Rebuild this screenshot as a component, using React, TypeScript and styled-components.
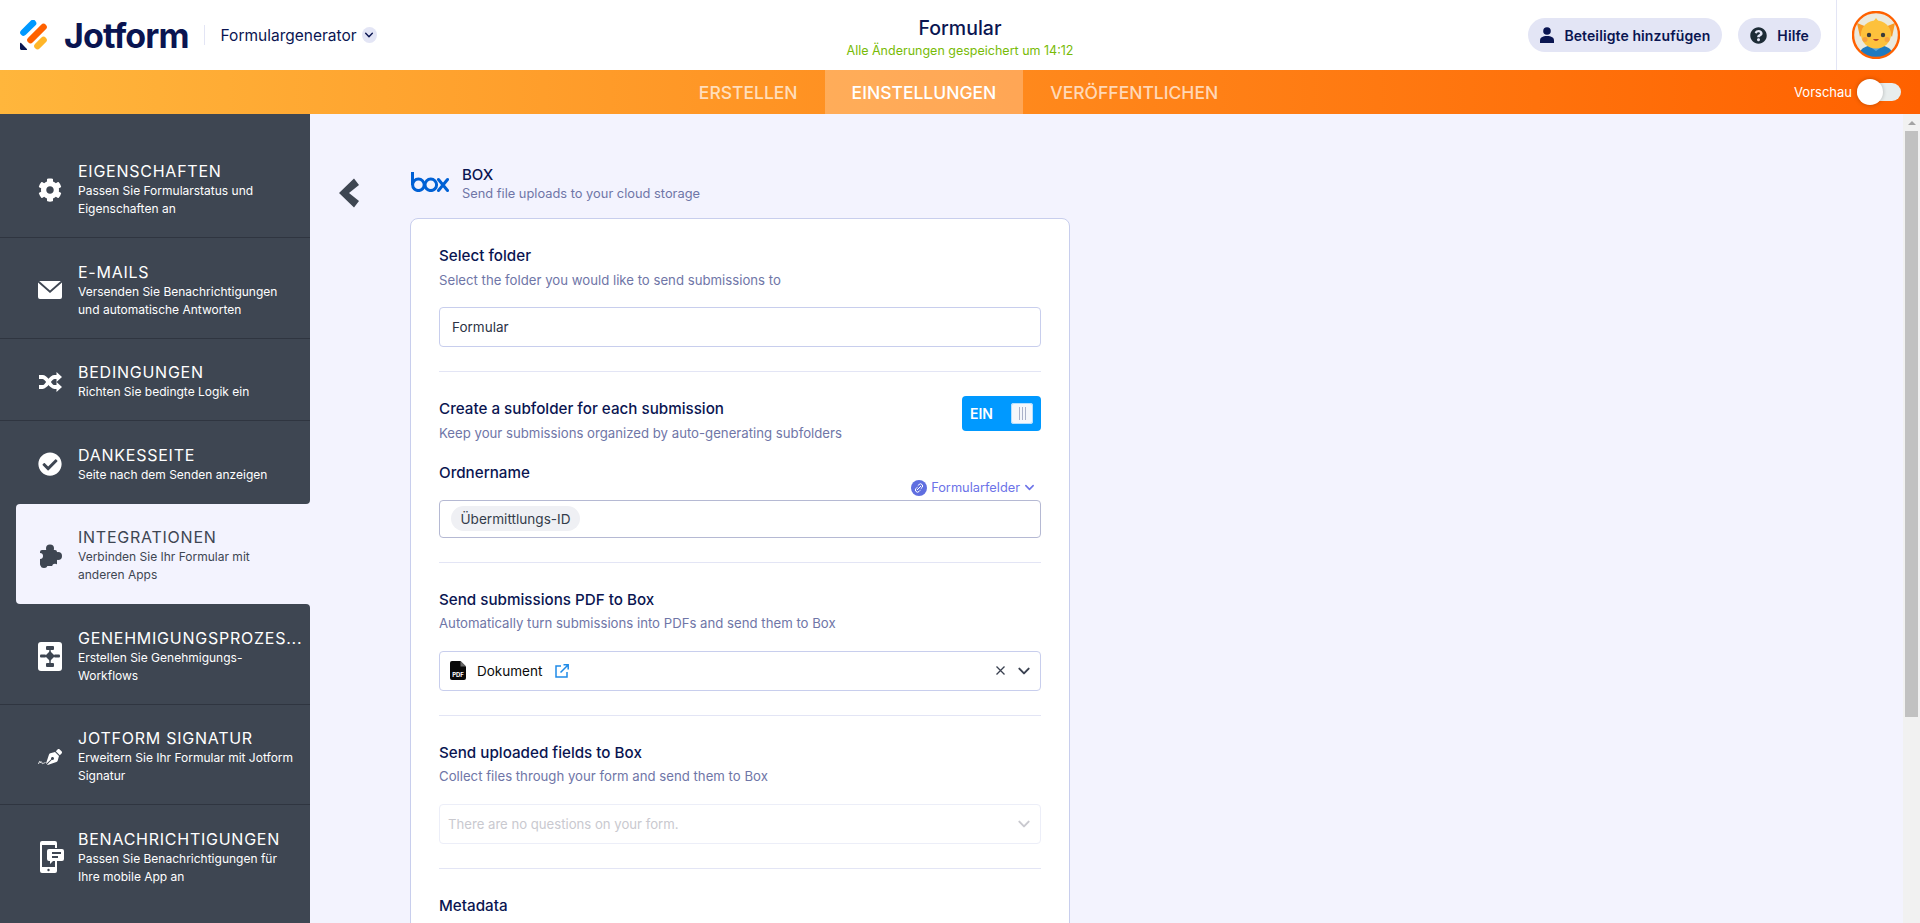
import React from "react"
import styled, { createGlobalStyle } from "styled-components"
import { FaCog, FaCheckCircle, FaQuestionCircle, FaPenNib } from "react-icons/fa"

const FONT = `Inter, "Noto Sans", sans-serif`

const GlobalStyle = createGlobalStyle`
html, body {
  margin: 0;
  padding: 0;
  height: 100%;
  overflow: hidden;
  font-family: ${FONT};
}
* {
  box-sizing: border-box;
}
`

const Page = styled.div`
display: flex;
flex-direction: column;
height: 923px;
overflow: hidden;
background: #f3f3fe;
`

const TopBar = styled.header`
display: grid;
grid-template-columns: 1fr auto 1fr;
align-items: center;
height: 70px;
flex: none;
background: #fff;
`
const BrandRow = styled.div`
display: flex;
align-items: center;
padding-left: 20px;
`
const LogoText = styled.span`
font-size: 34px;
font-weight: 700;
letter-spacing: -0.9px;
color: #0a1551;
margin-left: 16px;
`
const BrandDivider = styled.span`
width: 1px;
height: 20px;
background: #e3e5f5;
margin: 0 16px 0 15px;
`
const BrandLabel = styled.span`
font-size: 15.5px;
color: #0a1551;
`
const ChevronBubble = styled.span`
display: flex;
align-items: center;
justify-content: center;
width: 15px;
height: 16px;
margin-left: 5px;
border-radius: 50%;
background: #e3e5f5;
`
const FormTitle = styled.div`
text-align: center;
padding-top: 4px;
`
const FormName = styled.div`
font-size: 19.5px;
line-height: 22px;
font-weight: 500;
color: #0a1551;
padding-top: 2px;
`
const SavedNote = styled.div`
font-size: 12.5px;
line-height: 16px;
color: #78bb07;
margin-top: 4px;
`
const ActionRow = styled.div`
display: flex;
align-items: center;
justify-content: flex-end;
height: 100%;
`
const PillButton = styled.button`
display: flex;
align-items: center;
gap: 10px;
height: 34px;
padding: 0 12px;
margin-left: 16px;
border: none;
border-radius: 17px;
background: #e3e5f5;
color: #0a1551;
font-family: ${FONT};
font-size: 14px;
font-weight: 600;
letter-spacing: 0.1px;
`
const AvatarCell = styled.div`
display: flex;
align-items: center;
height: 100%;
margin-left: 15px;
padding: 0 20px 0 15px;
border-left: 1px solid #e3e5f5;
`

const TabBar = styled.nav`
display: grid;
grid-template-columns: 1fr auto 1fr;
align-items: stretch;
height: 44px;
flex: none;
background: linear-gradient(90deg, #ffb63c 0%, #ff6100 100%);
`
const Tabs = styled.div`
display: flex;
margin-left: -3px;
`
const Tab = styled.div<{ $active?: boolean }>`
display: flex;
align-items: center;
padding: 0 27px;
font-size: 17.5px;
font-weight: 500;
color: ${p => (p.$active ? "#fff" : "rgba(255,255,255,0.7)")};
background: ${p => (p.$active ? "rgba(255,255,255,0.25)" : "transparent")};
`
const PreviewRow = styled.div`
grid-column: 3;
display: flex;
align-items: center;
justify-content: flex-end;
padding-right: 19px;
`
const PreviewLabel = styled.span`
font-size: 13px;
color: #fff;
margin-right: 5px;
`
const PreviewTrack = styled.span`
display: block;
width: 44px;
height: 18px;
border-radius: 9px;
background: #e8eded;
`
const PreviewKnob = styled.span`
display: block;
width: 26px;
height: 26px;
margin-top: -4px;
border-radius: 50%;
background: #fff;
box-shadow: 0 0 4px rgba(0, 0, 0, 0.25);
`

const Workspace = styled.div`
display: flex;
flex: 1;
min-height: 0;
`

const Sidebar = styled.aside`
width: 310px;
flex: none;
padding-top: 23.5px;
background: linear-gradient(#f3f3fe, #f3f3fe) right 380px / 6px 120px no-repeat, #3e4652;
`
const SideItem = styled.div<{ $active?: boolean; $before?: boolean; $after?: boolean; $last?: boolean }>`
display: flex;
align-items: center;
gap: 16px;
margin-left: ${p => (p.$active ? "16px" : "0")};
padding: 23.5px 8px 19px ${p => (p.$active ? "22px" : "38px")};
background: ${p => (p.$active ? "#f3f3fe" : "#3e4652")};
border-bottom: 1px solid ${p => (p.$active || p.$before || p.$last ? "transparent" : "#2f3540")};
color: ${p => (p.$active ? "#3e4652" : "#fff")};
border-radius: ${p =>
  p.$active ? "4px 0 0 4px" : p.$before ? "0 0 4px 0" : p.$after ? "0 4px 0 0" : "0"};
`
const SideIcon = styled.span`
display: flex;
align-items: center;
justify-content: center;
width: 24px;
flex: none;
`
const SideTitle = styled.div`
font-size: 16px;
line-height: 20px;
letter-spacing: 0.75px;
margin-bottom: 1px;
white-space: nowrap;
text-transform: uppercase;
`
const SideText = styled.div`
font-size: 12px;
line-height: 18px;
white-space: nowrap;
`
const SignGroup = styled.span`
display: flex;
align-items: flex-end;
`
const PhoneSvg = styled.svg`
margin-left: 3px;
flex: none;
`

const Main = styled.main`
display: flex;
flex: 1;
min-width: 0;
padding: 51px 0 0 29px;
overflow: hidden;
`
const BackButton = styled.div`
width: 71px;
flex: none;
padding-top: 13px;
`
const Column = styled.div`
width: 660px;
flex: none;
`
const IntegrationHead = styled.div`
display: flex;
align-items: flex-start;
gap: 13px;
margin-left: 1px;
`
const LogoSlot = styled.div`
padding-top: 7px;
flex: none;
`
const IntegrationName = styled.div`
font-size: 15px;
line-height: 20px;
font-weight: 500;
color: #0a1551;
`
const IntegrationText = styled.div`
font-size: 12.85px;
line-height: 20px;
margin-top: -1px;
color: #6f76a7;
`
const Card = styled.section`
margin-top: 14px;
padding: 0 28px 60px;
background: #fff;
border: 1px solid #c8ceed;
border-radius: 8px;
`
const Block = styled.div<{ $last?: boolean }>`
padding: 24px 0;
border-bottom: ${p => (p.$last ? "none" : "1px solid #e3e5f5")};
`
const HeadRow = styled.div`
display: flex;
justify-content: space-between;
align-items: flex-start;
`
const Heading = styled.div`
padding-top: 3px;
`
const Label = styled.div`
font-size: 15.2px;
line-height: 20px;
font-weight: 500;
color: #0a1551;
`
const Hint = styled.div`
font-size: 13.2px;
line-height: 20px;
margin-top: 3.5px;
color: #6f76a7;
`
const Field = styled.div<{ $muted?: boolean; $strong?: boolean; $select?: boolean }>`
display: flex;
align-items: center;
height: ${p => (p.$strong ? "38px" : "40px")};
margin-top: ${p => (p.$strong ? "4px" : "17.5px")};
padding: 0 ${p => (p.$select ? "9px" : "12px")} 0 ${p => (p.$muted ? "8px" : p.$select ? "10px" : "12px")};
border-radius: 4px;
background: #fff;
border: 1px solid ${p => (p.$muted ? "#eceef8" : p.$strong ? "#b5b9d3" : "#c8ceed")};
color: ${p => (p.$muted ? "#c9c9cf" : "#2c3345")};
font-size: ${p => (p.$muted ? "13.15px" : "13.5px")};
`
const OnSwitch = styled.div`
display: flex;
align-items: center;
justify-content: space-between;
width: 79px;
height: 35px;
padding: 0 8px;
border-radius: 4px;
background: #0099ff;
color: #fff;
font-size: 14px;
font-weight: 600;
`
const SwitchGrip = styled.span`
display: flex;
align-items: center;
justify-content: center;
gap: 2px;
width: 22px;
height: 21px;
border-radius: 3px;
background: #f4f7fb;
box-shadow: inset 0 0 0 1px #b3dfff;
`
const GripLine = styled.span`
width: 1px;
height: 13px;
background: #a9b1c9;
`
const SubLabel = styled.div`
font-size: 15.2px;
line-height: 20px;
font-weight: 500;
color: #0a1551;
margin-top: 20px;
`
const FieldsLink = styled.div`
display: flex;
align-items: center;
justify-content: flex-end;
gap: 4px;
height: 16px;
margin-top: -3px;
padding-right: 6px;
font-size: 12.8px;
color: #6c73e8;
`
const Chip = styled.span`
display: flex;
align-items: center;
height: 25px;
padding: 0 9.5px;
margin-left: -1px;
border-radius: 13px;
background: #eff0f4;
color: #343c4a;
font-size: 13.6px;
`
const Spacer = styled.span`
flex: 1;
`
const ControlGap = styled.span`
width: 12px;
flex: none;
`
const DocName = styled.span`
margin: 0 13px 0 11px;
color: #0a0a0a;
`

const ScrollTrack = styled.div`
display: flex;
flex-direction: column;
align-items: center;
width: 17px;
flex: none;
background: #f1f1f1;
`
const ScrollArrow = styled.div`
width: 0;
height: 0;
margin: 7px 0 6px;
border-left: 4px solid transparent;
border-right: 4px solid transparent;
border-bottom: 4px solid #a3a3a3;
`
const ScrollThumb = styled.div`
width: 13px;
height: 586px;
background: #c1c1c1;
`

const SmallChevron = ({ color = "#0a1551", size = 10 }: { color?: string; size?: number }) => (
    <svg width={size} height={size} viewBox="0 0 12 12" fill="none">
        <path d="M2 4l4 4 4-4" stroke={color} strokeWidth="1.7" strokeLinecap="round" strokeLinejoin="round" />
    </svg>
)

const LogoMark = () => (
    <svg width="28" height="30" viewBox="0 0 28 30">
        <path d="M3.5 12.5L13 3.2" stroke="#0099ff" strokeWidth="6.6" strokeLinecap="round" />
        <path d="M10.5 20L23.5 7" stroke="#ff6100" strokeWidth="6.6" strokeLinecap="round" />
        <path d="M17.5 26L23.5 20" stroke="#ffb629" strokeWidth="6.6" strokeLinecap="round" />
        <path d="M0 23.5c0-.6.7-.9 1.1-.5l5.8 6c.4.4.1 1-.5 1H1.5C.7 30 0 29.300 0 28.500z" fill="#0a1551" />
    </svg>
)

const PersonIcon = () => (
    <svg width="14" height="16" viewBox="0 0 14 16" fill="#0a1551">
        <circle cx="7" cy="4" r="3.8" />
        <path d="M0 13.500C0 10.500 2.500 9 7 9s7 1.500 7 4.500V16H0z" />
    </svg>
)

const Avatar = () => (
    <svg width="48" height="48" viewBox="0 0 48 48">
        <defs>
            <clipPath id="avatarClip"><circle cx="24" cy="24" r="23" /></clipPath>
        </defs>
        <g clipPath="url(#avatarClip)">
            <rect width="48" height="48" fill="#ebe9dd" />
            <path d="M6 48c0-9 6-14 18-14s18 5 18 14z" fill="#1f7ac0" />
            <path d="M17 35l7 5 7-5-7-2z" fill="#5aa5dc" />
            <path d="M5 12l10 4-7 10zM43 12l-10 4 7 10z" fill="#f79a24" />
            <ellipse cx="24" cy="23.500" rx="15" ry="14" fill="#fdc13c" />
            <path d="M21 11l3-4 3 4z" fill="#fdc13c" />
            <circle cx="17" cy="24" r="2.200" fill="#3a3a3a" />
            <circle cx="31" cy="24" r="2.200" fill="#3a3a3a" />
            <circle cx="13" cy="28.500" r="2.500" fill="#f7a13e" />
            <circle cx="35" cy="28.500" r="2.500" fill="#f7a13e" />
            <path d="M21 28c1.500 2.500 4.500 2.500 6 0z" fill="#b3402a" />
        </g>
        <circle cx="24" cy="24" r="23" fill="none" stroke="#ff6100" strokeWidth="2.400" />
    </svg>
)

const MailIcon = () => (
    <svg width="24" height="18" viewBox="0 0 24 18">
        <path d="M1.200 0h21.600L12 9.500z" fill="#fff" />
        <path d="M0 1.500l12 10.500L24 1.500V16a2 2 0 0 1-2 2H2a2 2 0 0 1-2-2z" fill="#fff" />
    </svg>
)

const ShuffleIcon = () => (
    <svg width="24" height="20" viewBox="0 0 24 20" fill="none">
        <path d="M1 5h3.500c5 0 7 10 12 10H19" stroke="currentColor" strokeWidth="3.900" />
        <path d="M1 15h3.500c5 0 7-10 12-10H19" stroke="currentColor" strokeWidth="3.900" />
        <path d="M18.500 0L24 5l-5.500 5zM18.500 10L24 15l-5.500 5z" fill="currentColor" />
    </svg>
)

const PuzzleIcon = () => (
    <svg width="24" height="24" viewBox="0 0 24 24">
        <rect x="2" y="6" width="17" height="16" rx="2" fill="#3e4652" />
        <circle cx="12" cy="4.500" r="4" fill="#3e4652" />
        <circle cx="20" cy="12" r="4" fill="#3e4652" />
        <circle cx="6" cy="20.500" r="3.500" fill="#3e4652" />
        <circle cx="2" cy="12" r="3" fill="#f3f3fe" />
        <circle cx="17" cy="22.500" r="2.800" fill="#f3f3fe" />
    </svg>
)

const FlowIcon = () => (
    <svg width="24" height="29" viewBox="0 0 24 29">
        <rect width="24" height="29" rx="3" fill="#fff" />
        <rect x="8" y="4" width="8" height="4" rx="1" fill="#3e4652" />
        <path d="M12 9l5 5-5 5-5-5z" fill="#3e4652" />
        <rect x="2" y="12.500" width="6" height="3" rx="1" fill="#3e4652" />
        <rect x="16" y="12.500" width="6" height="3" rx="1" fill="#3e4652" />
        <rect x="8" y="21" width="8" height="4" rx="1" fill="#3e4652" />
        <rect x="11.300" y="7" width="1.400" height="15" fill="#3e4652" />
    </svg>
)

const SignIcon = () => (
    <SignGroup>
        <svg width="8" height="7" viewBox="0 0 8 7" fill="none">
            <path d="M0.500 6c1-3.500 2-4 1.500-1 1-1.500 2-1.500 2 0s1.500 0 3.500-.5" stroke="#fff" strokeWidth="0.800" />
        </svg>
        <FaPenNib size={16} />
    </SignGroup>
)

const PhoneIcon = () => (
    <PhoneSvg width="26" height="32" viewBox="0 0 26 32" fill="none">
        <path d="M3 0h13a2 2 0 0 1 2 2v5h-2V4H3v22h13v-6h2v10a2 2 0 0 1-2 2H3a2 2 0 0 1-2-2V2a2 2 0 0 1 2-2z" fill="#fff" />
        <circle cx="9.500" cy="29" r="1.200" fill="#3e4652" />
        <path d="M11 8h13a2 2 0 0 1 2 2v8a2 2 0 0 1-2 2h-9l-3 3v-3h-1a2 2 0 0 1-2-2v-8a2 2 0 0 1 2-2z" fill="#fff" transform="translate(-1 0)" />
        <rect x="13" y="11" width="9" height="2" fill="#3e4652" />
        <rect x="13" y="15" width="6" height="2" fill="#3e4652" />
    </PhoneSvg>
)

const BackChevron = () => (
    <svg width="20" height="30" viewBox="0 0 20 30">
        <path d="M15 0.500L20 7 10 15l10 8-5 6.500L0 15z" fill="#3e4652" strokeLinejoin="round" />
    </svg>
)

const BoxLogo = () => (
    <svg width="38" height="20" viewBox="0 0 38 20" fill="none" stroke="#0061d5" strokeWidth="3">
        <path d="M1.500 0v13" />
        <circle cx="7.400" cy="12.800" r="5.800" />
        <circle cx="19.800" cy="12.800" r="5.800" />
        <path d="M27.500 7.500l9 11M36.500 7.500l-9 11" strokeLinecap="round" />
    </svg>
)

const LinkBadge = () => (
    <svg width="16" height="16" viewBox="0 0 16 16" fill="none">
        <circle cx="8" cy="8" r="8" fill="#5f6ee0" />
        <path d="M6.200 9.800l3.600-3.600M7 5.500l1-1a2 2 0 0 1 3 3l-1 1M9 10.500l-1 1a2 2 0 0 1-3-3l1-1" stroke="#fff" strokeWidth="1" strokeLinecap="round" />
    </svg>
)

const PdfIcon = () => (
    <svg width="16" height="19" viewBox="0 0 16 19">
        <path d="M2 0h8.500L16 5.500V17a2 2 0 0 1-2 2H2a2 2 0 0 1-2-2V2a2 2 0 0 1 2-2z" fill="#0a0a0a" />
        <path d="M10.500 0v5.500H16z" fill="#666" />
        <text x="8" y="15.500" fontSize="6" fontWeight="700" textAnchor="middle" fill="#fff" fontFamily="Inter, sans-serif">PDF</text>
    </svg>
)

const ExternalIcon = () => (
    <svg width="14" height="14" viewBox="0 0 14 14" fill="none" stroke="#1f8be8" strokeWidth="1.500">
        <path d="M6 2H1v11h11V8" />
        <path d="M5.500 8.500L13 1M8.500 0.800h4.700v4.700" />
    </svg>
)

const CrossIcon = () => (
    <svg width="9" height="9" viewBox="0 0 9 9" fill="none" stroke="#3a4150" strokeWidth="1.300">
        <path d="M0.500 0.500l8 8M8.500 0.500l-8 8" />
    </svg>
)

const sideItems = [
    { title: "Eigenschaften", text: ["Passen Sie Formularstatus und", "Eigenschaften an"], icon: <FaCog size={24} /> },
    { title: "E-Mails", text: ["Versenden Sie Benachrichtigungen", "und automatische Antworten"], icon: <MailIcon /> },
    { title: "Bedingungen", text: ["Richten Sie bedingte Logik ein"], icon: <ShuffleIcon /> },
    { title: "Dankesseite", text: ["Seite nach dem Senden anzeigen"], icon: <FaCheckCircle size={24} />, before: true },
    { title: "Integrationen", text: ["Verbinden Sie Ihr Formular mit", "anderen Apps"], icon: <PuzzleIcon />, active: true },
    { title: "Genehmigungsprozes...", text: ["Erstellen Sie Genehmigungs-", "Workflows"], icon: <FlowIcon />, after: true },
    { title: "Jotform Signatur", text: ["Erweitern Sie Ihr Formular mit Jotform", "Signatur"], icon: <SignIcon /> },
    { title: "Benachrichtigungen", text: ["Passen Sie Benachrichtigungen für", "Ihre mobile App an"], icon: <PhoneIcon />, last: true },
]

export default function App() {
    return (
        <Page>
            <GlobalStyle />
            <TopBar>
                <BrandRow>
                    <LogoMark />
                    <LogoText>Jotform</LogoText>
                    <BrandDivider />
                    <BrandLabel>Formulargenerator</BrandLabel>
                    <ChevronBubble><SmallChevron /></ChevronBubble>
                </BrandRow>
                <FormTitle>
                    <FormName>Formular</FormName>
                    <SavedNote>Alle Änderungen gespeichert um 14:12</SavedNote>
                </FormTitle>
                <ActionRow>
                    <PillButton><PersonIcon />Beteiligte hinzufügen</PillButton>
                    <PillButton>
                        <FaQuestionCircle size={17} color="#1d2b36" />
                        Hilfe
                    </PillButton>
                    <AvatarCell><Avatar /></AvatarCell>
                </ActionRow>
            </TopBar>
            <TabBar>
                <span />
                <Tabs>
                    <Tab>ERSTELLEN</Tab>
                    <Tab $active>EINSTELLUNGEN</Tab>
                    <Tab>VERÖFFENTLICHEN</Tab>
                </Tabs>
                <PreviewRow>
                    <PreviewLabel>Vorschau</PreviewLabel>
                    <PreviewTrack><PreviewKnob /></PreviewTrack>
                </PreviewRow>
            </TabBar>
            <Workspace>
                <Sidebar>
                    {sideItems.map(item => (
                        <SideItem
                            key={item.title}
                            $active={item.active}
                            $before={item.before}
                            $after={item.after}
                            $last={item.last}
                        >
                            <SideIcon>{item.icon}</SideIcon>
                            <div>
                                <SideTitle>{item.title}</SideTitle>
                                {item.text.map(line => <SideText key={line}>{line}</SideText>)}
                            </div>
                        </SideItem>
                    ))}
                </Sidebar>
                <Main>
                    <BackButton><BackChevron /></BackButton>
                    <Column>
                        <IntegrationHead>
                            <LogoSlot><BoxLogo /></LogoSlot>
                            <div>
                                <IntegrationName>BOX</IntegrationName>
                                <IntegrationText>Send file uploads to your cloud storage</IntegrationText>
                            </div>
                        </IntegrationHead>
                        <Card>
                            <Block>
                                <Heading>
                                    <Label>Select folder</Label>
                                    <Hint>Select the folder you would like to send submissions to</Hint>
                                </Heading>
                                <Field>Formular</Field>
                            </Block>
                            <Block>
                                <HeadRow>
                                    <Heading>
                                        <Label>Create a subfolder for each submission</Label>
                                        <Hint>Keep your submissions organized by auto-generating subfolders</Hint>
                                    </Heading>
                                    <OnSwitch>
                                        EIN
                                        <SwitchGrip><GripLine /><GripLine /><GripLine /></SwitchGrip>
                                    </OnSwitch>
                                </HeadRow>
                                <SubLabel>Ordnername</SubLabel>
                                <FieldsLink>
                                    <LinkBadge />
                                    Formularfelder
                                    <SmallChevron color="#6c73e8" size={11} />
                                </FieldsLink>
                                <Field $strong><Chip>Übermittlungs-ID</Chip></Field>
                            </Block>
                            <Block>
                                <Heading>
                                    <Label>Send submissions PDF to Box</Label>
                                    <Hint>Automatically turn submissions into PDFs and send them to Box</Hint>
                                </Heading>
                                <Field $select>
                                    <PdfIcon />
                                    <DocName>Dokument</DocName>
                                    <ExternalIcon />
                                    <Spacer />
                                    <CrossIcon />
                                    <ControlGap />
                                    <SmallChevron color="#3a4150" size={14} />
                                </Field>
                            </Block>
                            <Block>
                                <Heading>
                                    <Label>Send uploaded fields to Box</Label>
                                    <Hint>Collect files through your form and send them to Box</Hint>
                                </Heading>
                                <Field $select $muted>
                                    There are no questions on your form.
                                    <Spacer />
                                    <SmallChevron color="#c9c9cf" size={14} />
                                </Field>
                            </Block>
                            <Block $last>
                                <Heading>
                                    <Label>Metadata</Label>
                                </Heading>
                            </Block>
                        </Card>
                    </Column>
                </Main>
                <ScrollTrack>
                    <ScrollArrow />
                    <ScrollThumb />
                </ScrollTrack>
            </Workspace>
        </Page>
    )
}
